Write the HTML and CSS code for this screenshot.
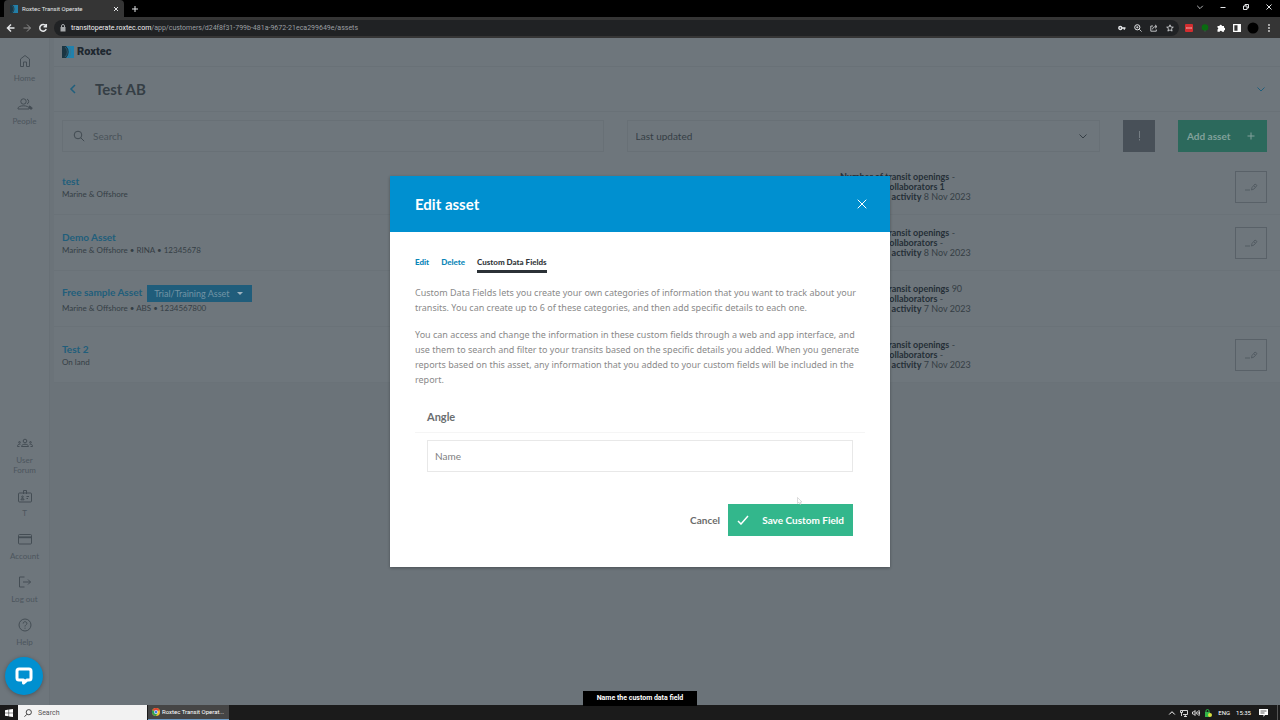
FILE: index.html
```html
<!DOCTYPE html>
<html lang="en">
<head>
<meta charset="UTF-8">
<meta name="viewport" content="width=device-width, initial-scale=1.0">
<title>Roxtec Transit Operate</title>
<link rel="stylesheet" href="styles.css">
</head>
<body>

<svg class="sprite" aria-hidden="true">
    <symbol id="roxtec" viewBox="0 0 12 12">
        <rect width="12" height="12" fill="#2181ac"/>
        <path d="M0 0h4a8 8 0 0 1 0 12H0z" fill="#1b3542"/>
        <path d="M3 1a6.500 6.500 0 0 1 0 10M6 0a8 8 0 0 1 0 12" fill="none" stroke="#3f7087" stroke-width=".6"/>
    </symbol>
    <symbol id="pen" viewBox="0 0 14 10">
        <path d="M1 8h5M7.500 8l.5-2.500 3-3.500 2 1.500-3 3.500zM10 4l1.500 1.200"/>
    </symbol>
    <symbol id="down" viewBox="0 0 10 10">
        <path d="M1.500 3.500 5 7l3.500-3.500"/>
    </symbol>
</svg>

<!-- browser window -->
<header class="browser">
    <div class="tab-strip">
        <div class="tab">
            <svg class="fav"><use href="#roxtec"/></svg>
            <span>Roxtec Transit Operate</span>
            <button class="plain" aria-label="Close tab"><svg class="line" width="6" height="6" viewBox="0 0 6 6"><path d="M1 1l4 4M5 1 1 5"/></svg></button>
        </div>
        <button class="plain new-tab" aria-label="New tab"><svg class="line" width="8" height="8" viewBox="0 0 8 8"><path d="M4 1v6M1 4h6"/></svg></button>
        <div class="window-buttons">
            <button class="plain" aria-label="Search tabs"><svg class="line" width="8" height="8" viewBox="0 0 10 10"><use href="#down"/></svg></button>
            <button class="plain" aria-label="Minimize"><svg class="line" width="8" height="8" viewBox="0 0 8 8"><path d="M1.500 4.500h5"/></svg></button>
            <button class="plain" aria-label="Restore"><svg class="line" width="8" height="8" viewBox="0 0 8 8"><path d="M1.500 3h3.500v3.500H1.500zM3 3V1.500h3.500V5H5"/></svg></button>
            <button class="plain" aria-label="Close"><svg class="line" width="8" height="8" viewBox="0 0 8 8"><path d="M1.500 1.500l5 5M6.500 1.500l-5 5"/></svg></button>
        </div>
    </div>
    <div class="toolbar">
        <button class="plain" aria-label="Back"><svg class="line bold" width="10" height="10" viewBox="0 0 10 10"><path d="M8.500 5h-7M5 1.500 1.500 5 5 8.500"/></svg></button>
        <button class="plain off" aria-label="Forward"><svg class="line" width="10" height="10" viewBox="0 0 10 10"><path d="M1.500 5h7M5 1.500 8.500 5 5 8.500"/></svg></button>
        <button class="plain" aria-label="Reload"><svg class="line bold" width="10" height="10" viewBox="0 0 10 10"><path d="M7.800 3A3.300 3.300 0 1 0 8.200 6M8.300 1v2.700H5.600"/></svg></button>
        <div class="address">
            <svg width="6" height="8" viewBox="0 0 6 8"><rect x=".5" y="3" width="5" height="4.500" fill="#a5a8aa"/><path d="M1.500 3V2a1.500 1.500 0 0 1 3 0v1" fill="none" stroke="#a5a8aa"/></svg>
            <span class="url"><b>transitoperate.roxtec.com</b>/app/customers/d24f8f31-799b-481a-9672-21eca299649e/assets</span>
            <div class="icons">
                <svg class="line" width="8" height="8" viewBox="0 0 8 8"><circle cx="2.300" cy="4" r="1.500" stroke-width="1.400"/><path d="M4 4h3.500M6.300 4v1.800" stroke-width="1.300"/></svg>
                <svg class="line" width="8" height="8" viewBox="0 0 8 8"><circle cx="3.300" cy="3.300" r="2.600"/><path d="M5.300 5.300 7.600 7.600M2.200 3.300h2.200M3.300 2.200v2.200" stroke-width=".8"/></svg>
                <svg class="line" width="8" height="8" viewBox="0 0 8 8"><path d="M3 2H.8v5.200h5.500V5.500M2.500 5.300C2.800 3.500 4 2.600 6 2.600M5 .9l2 1.700-2 1.700" stroke-width=".8"/></svg>
                <svg class="line" width="8" height="8" viewBox="0 0 8 8"><path d="M4 .8l.9 2.200 2.400.2-1.800 1.500.6 2.400L4 5.900 1.900 7.100l.6-2.400L.7 3.200l2.400-.2z" stroke-width=".8"/></svg>
            </div>
        </div>
        <div class="icons">
            <svg width="8" height="8" viewBox="0 0 8 8"><rect width="8" height="8" rx="1" fill="#d32d2f"/><path d="M1.300 4h1.300M3.400 4h1.200M5.400 4h1.300" stroke="#fff" stroke-width="1.200"/></svg>
            <svg width="8" height="8" viewBox="0 0 8 8"><circle cx="4" cy="3.500" r="3.300" fill="#0a6b10"/><path d="M3.500 6h1v2h-1z" fill="#30583a"/></svg>
            <svg width="8" height="8" viewBox="0 0 8 8"><path d="M.5 2h2a1.200 1.200 0 1 1 2.400 0H7v2a1.200 1.200 0 1 1 0 2v1.700H5a1.200 1.200 0 0 0-2.300 0H.5V5.500a1.200 1.200 0 0 0 0-2z" fill="#fff"/></svg>
            <svg width="8" height="8" viewBox="0 0 8 8"><path d="M.7.700h6.600v6.600H.7z" fill="none" stroke="#fff" stroke-width="1.300"/><path d="M4.500 1h3v6h-3z" fill="#fff"/></svg>
            <svg class="avatar" viewBox="0 0 12 12"><circle cx="6" cy="6" r="5.500"/></svg>
            <svg width="8" height="8" viewBox="0 0 8 8" fill="#ddd"><circle cx="4" cy="1" r=".9"/><circle cx="4" cy="4" r=".9"/><circle cx="4" cy="7" r=".9"/></svg>
        </div>
    </div>
</header>

<div class="app">
    <nav class="sidebar">
        <a href="#"><svg viewBox="0 0 18 18"><path d="M4.500 14.500V7L9 3.500 13.500 7v7.500h-3V10h-3v4.500z"/></svg>Home</a>
        <a href="#"><svg viewBox="0 0 18 18"><circle cx="7.500" cy="6.500" r="2.700"/><path d="M2 14v-.7c0-1.500 2.500-2.500 5.500-2.500s5.500 1 5.500 2.500v.7zM11 4a2.700 2.700 0 0 1 0 5"/><path class="solid" d="M13 11c2 .5 3 1.200 3 2.500v.5h-2z"/></svg>People</a>
        <a href="#" class="first-bottom"><svg viewBox="0 0 18 18"><circle cx="9" cy="7" r="1.800"/><path d="M5.500 12.500c0-3 7-3 7 0zM1.500 12.500c0-2 1-2.500 3-2.300M16.500 12.500c0-2-1-2.500-3-2.300M1.500 12.500h2M14.500 12.500h2"/><circle cx="3.500" cy="8.300" r=".8"/><circle cx="14.500" cy="8.300" r=".8"/></svg>User Forum</a>
        <a href="#"><svg viewBox="0 0 18 18"><rect x="2.500" y="6" width="13" height="9" rx="1"/><path d="M7.500 7V3.500h3V7M5 12.800c0-2 3-2 3 0zM10.500 9.500H13M10.500 11.500h1.500"/><circle cx="6.500" cy="9.800" r=".8"/></svg>T</a>
        <a href="#"><svg viewBox="0 0 18 18"><rect x="2.500" y="4.500" width="13" height="9.500" rx="1"/><path d="M2.500 7.300h13" stroke-width="1.800"/></svg>Account</a>
        <a href="#"><svg viewBox="0 0 18 18"><path d="M8.500 4H3.500v10h5M7 9h7.500M12 6.500 14.500 9 12 11.500"/></svg>Log out</a>
        <a href="#"><svg viewBox="0 0 18 18"><circle cx="9" cy="9" r="6"/><path d="M7.200 7.500c0-2.500 3.700-2.300 3.700 0 0 1.300-1.900 1.400-1.900 3M9 11.700v1"/></svg>Help</a>
    </nav>

    <main class="main">
        <div class="logo"><svg><use href="#roxtec"/></svg><strong>Roxtec</strong></div>
        <div class="customer">
            <a href="#" aria-label="Back to customers"><svg class="line bold" width="10" height="10" viewBox="0 0 10 10"><path d="M7 1 3 5l4 4"/></svg></a>
            <h1>Test AB</h1>
            <button class="plain" aria-label="Show details"><svg class="line" width="10" height="10"><use href="#down"/></svg></button>
        </div>
        <div class="filters">
            <div class="search">
                <svg class="line" width="12" height="12" viewBox="0 0 12 12"><circle cx="5" cy="5" r="3.800"/><path d="M7.800 7.800 11.200 11.200"/></svg>
                <input type="text" placeholder="Search" aria-label="Search">
            </div>
            <div class="sort">
                <select aria-label="Sort by"><option>Last updated</option></select>
                <svg class="line" width="10" height="10"><use href="#down"/></svg>
            </div>
            <button class="direction" aria-label="Sort direction"><svg class="line" width="10" height="12" viewBox="0 0 10 12"><path d="M5.500 1v7M5.500 9v1.500"/></svg></button>
            <button class="add">Add asset <svg class="line" width="10" height="10" viewBox="0 0 10 10"><path d="M5 1.500v7M1.500 5h7"/></svg></button>
        </div>
        <ul class="assets">
            <li>
                <div class="asset"><a href="#">test</a><p>Marine &amp; Offshore</p></div>
                <div class="meta"><b>Number of transit openings</b> -<br><b>Number of collaborators 1</b><br><b>Last training activity</b> 8 Nov 2023</div>
                <button class="edit" aria-label="Edit test"><svg class="line" width="14" height="10"><use href="#pen"/></svg></button>
            </li>
            <li>
                <div class="asset"><a href="#">Demo Asset</a><p>Marine &amp; Offshore • RINA • 12345678</p></div>
                <div class="meta"><b>Number of transit openings</b> -<br><b>Number of collaborators</b> -<br><b>Last training activity</b> 8 Nov 2023</div>
                <button class="edit" aria-label="Edit Demo Asset"><svg class="line" width="14" height="10"><use href="#pen"/></svg></button>
            </li>
            <li>
                <div class="asset"><a href="#">Free sample Asset</a> <button class="badge">Trial/Training Asset <svg width="6" height="4" viewBox="0 0 6 4"><path d="M0 0h6L3 3z"/></svg></button><p>Marine &amp; Offshore • ABS • 1234567800</p></div>
                <div class="meta"><b>Number of transit openings</b> 90<br><b>Number of collaborators</b> -<br><b>Last training activity</b> 7 Nov 2023</div>
            </li>
            <li>
                <div class="asset"><a href="#">Test 2</a><p>On land</p></div>
                <div class="meta"><b>Number of transit openings</b> -<br><b>Number of collaborators</b> -<br><b>Last training activity</b> 7 Nov 2023</div>
                <button class="edit" aria-label="Edit Test 2"><svg class="line" width="14" height="10"><use href="#pen"/></svg></button>
            </li>
        </ul>
    </main>

    <div class="overlay">
        <div class="modal" role="dialog" aria-labelledby="modalTitle">
            <div class="modal-head">
                <h2 id="modalTitle">Edit asset</h2>
                <button class="plain" aria-label="Close dialog"><svg class="line" width="10" height="10" viewBox="0 0 10 10"><path d="M.7.700l8.600 8.600M9.300.7.700 9.300"/></svg></button>
            </div>
            <div class="modal-body">
                <div class="tabs">
                    <a href="#">Edit</a>
                    <a href="#">Delete</a>
                    <a href="#" class="active">Custom Data Fields</a>
                </div>
                <p>Custom Data Fields lets you create your own categories of information that you want to track about your transits. You can create up to 6 of these categories, and then add specific details to each one.</p>
                <p>You can access and change the information in these custom fields through a web and app interface, and use them to search and filter to your transits based on the specific details you added. When you generate reports based on this asset, any information that you added to your custom fields will be included in the report.</p>
                <form>
                    <label for="fieldName">Angle</label>
                    <input type="text" id="fieldName" placeholder="Name">
                    <div class="actions">
                        <button type="button" class="cancel">Cancel</button>
                        <button type="button" class="save"><svg class="line bold" width="12" height="10" viewBox="0 0 12 10"><path d="M1 6l3 3 7-8"/></svg>Save Custom Field</button>
                    </div>
                </form>
            </div>
        </div>
    </div>

    <button class="chat" aria-label="Chat"><svg width="20" height="20" viewBox="0 0 20 20"><path d="M5 3h10a2 2 0 0 1 2 2v7a2 2 0 0 1-2 2h-2l-3.500 3v-3H5a2 2 0 0 1-2-2V5a2 2 0 0 1 2-2z"/></svg></button>
    <svg class="cursor" width="6" height="8" viewBox="0 0 6 8"><path d="M.5.500v6l1.500-1.300L3 7.300l1-.4L3.300 5H5z"/></svg>
</div>

<footer class="taskbar">
    <button class="plain start" aria-label="Start"><svg width="8" height="8" viewBox="0 0 8 8" fill="#fff"><path d="M0 1.200 3.600.6v3.100H0zM4.100.5 8 0v3.700H4.100zM0 4.200h3.600v3.100L0 6.800zM4.100 4.200H8V8l-3.900-.6z"/></svg></button>
    <div class="win-search">
        <svg class="line" width="8" height="8" viewBox="0 0 8 8"><circle cx="4.800" cy="3.200" r="2.600"/><path d="M3 5.200.5 7.700"/></svg>
        <input type="text" placeholder="Search" aria-label="Search Windows">
    </div>
    <button class="task"><svg width="8" height="8" viewBox="0 0 8 8"><circle cx="4" cy="4" r="4" fill="#f2c230"/><path d="M.5 2A4 4 0 0 1 7.500 2L4 4z" fill="#de4334"/><path d="M.5 2A4 4 0 0 0 4 8l1.500-3z" fill="#2fa04f"/><circle cx="4" cy="4" r="1.900" fill="#fff"/><circle cx="4" cy="4" r="1.400" fill="#3f7de8"/></svg>Roxtec Transit Operat...</button>
    <div class="tray">
        <svg class="line" width="8" height="8" viewBox="0 0 8 8"><path d="M1.200 5.500 4 2.700l2.800 2.800"/></svg>
        <svg class="line" width="8" height="8" viewBox="0 0 8 8"><path d="M2.500 1.500h5v4H3M4 7.500h3M5.300 5.500v2M.5 1.500h2v2h-2zM1.500 3.500v3.500" stroke-width=".8"/></svg>
        <svg class="line" width="8" height="8" viewBox="0 0 8 8"><path d="M.5 3h1L3 1.500v5L1.500 5h-1zM4.300 2.800v2.400M5.600 2c.7 1 .7 3 0 4M6.800 1c1 2 1 4 0 6" stroke-width=".8"/></svg>
        <svg width="8" height="8" viewBox="0 0 8 8"><rect x="1" y="3" width="5" height="5" fill="#31b44a"/><path d="M2 3V2a1.500 1.500 0 0 1 3 0v1" fill="none" stroke="#31b44a"/><circle cx="6" cy="6" r="2" fill="#d6dd3f"/></svg>
        <span>ENG</span>
        <span>15:35</span>
        <svg class="notes" width="9" height="8" viewBox="0 0 9 8"><path d="M0 0h9v6H6L4.500 8V6H0z" fill="#fff"/><path d="M1.500 2h6M1.500 4h4" stroke="#222" stroke-width=".7"/></svg>
    </div>
</footer>
<div class="caption">Name the custom data field</div>

</body>
</html>
```

FILE: styles.css
```css
* {
    box-sizing: border-box;
}
body {
    margin: 0;
    height: 100vh;
    display: flex;
    flex-direction: column;
    overflow: hidden;
    font-family: Lato, "Liberation Sans", sans-serif;
    font-size: 10px;
    line-height: 10px;
    color: #353e45;
    background: #6b7379;
}
h1, h2, p, ul {
    margin: 0;
    padding: 0;
}
a {
    color: inherit;
    text-decoration: none;
}
button, input, select {
    font: inherit;
    color: inherit;
    border: 0;
    padding: 0;
    background: none;
    border-radius: 0;
}
button {
    cursor: pointer;
}
svg {
    display: block;
    flex: none;
}
.sprite {
    position: absolute;
    width: 0;
    height: 0;
}
.line, #pen, #down {
    fill: none;
    stroke: currentColor;
}
.bold {
    stroke-width: 1.5;
}
.plain {
    display: flex;
    align-items: center;
    justify-content: center;
}

/* browser */
.browser {
    flex: none;
    font-family: Roboto, sans-serif;
    font-size: 7px;
    color: #e4e6e8;
    background: #000;
}
.tab-strip {
    display: flex;
    height: 17px;
    padding-left: 4px;
}
.tab {
    display: flex;
    align-items: center;
    gap: 4px;
    width: 120px;
    padding: 0 5px 0 6px;
    font-size: 6px;
    background: #353535;
    border-radius: 4px 4px 0 0;
}
.tab span {
    flex: 1;
}
.fav {
    width: 8px;
    height: 8px;
}
.new-tab {
    width: 22px;
}
.window-buttons {
    display: flex;
    margin-left: auto;
}
.window-buttons button {
    width: 23px;
    height: 14px;
}
.toolbar {
    display: flex;
    align-items: center;
    height: 21px;
    padding: 0 7px 0 6px;
    gap: 6px;
    background: #353535;
}
.off {
    color: #929292;
}
.address {
    flex: 1;
    display: flex;
    align-items: center;
    gap: 5px;
    height: 16px;
    padding: 0 5px 0 6px;
    border-radius: 8px;
    background: #202224;
}
.url {
    flex: 1;
    color: #9b9fa2;
}
.url b {
    font-weight: normal;
    color: #f1f1f1;
}
.icons {
    display: flex;
    align-items: center;
    gap: 8px;
}
.avatar {
    width: 12px;
    height: 12px;
    margin: 0 -2px;
}

/* app */
.app {
    position: relative;
    flex: 1;
    min-height: 0;
    display: flex;
}
.sidebar {
    display: flex;
    flex-direction: column;
    gap: 12px;
    width: 50px;
    padding: 14px 8px 58px;
    font-size: 8px;
    text-align: center;
    color: #4c555c;
    background: #6e767c;
    border-right: 1px solid #687076;
}
.sidebar svg {
    width: 18px;
    height: 18px;
    margin: 0 auto 3px;
    fill: none;
    stroke: #444d54;
}
.sidebar .solid {
    fill: #444d54;
}
.first-bottom {
    margin-top: auto;
}
.main {
    flex: 1;
    margin-left: 4px;
}
.logo {
    display: flex;
    align-items: center;
    gap: 3px;
    height: 29px;
    padding-left: 8px;
    font-size: 11px;
    color: #1e2830;
    background: #6e767c;
    border-bottom: 1px solid #697177;
}
.logo svg {
    width: 12px;
    height: 12px;
}
.logo strong {
    font-family: Roboto, sans-serif;
    font-weight: 900;
}
.customer {
    display: flex;
    align-items: center;
    gap: 17px;
    height: 45px;
    padding: 0 14px;
    background: #6e767c;
    border-bottom: 1px solid #697177;
    color: #205f7d;
}
.customer h1 {
    flex: 1;
    font-size: 15px;
    line-height: 20px;
    color: #353e45;
}
.filters {
    display: flex;
    gap: 23px;
    padding: 8px 13px 7px 8px;
    background: #6e767c;
}
.search, .sort {
    display: flex;
    align-items: center;
    height: 32px;
    border: 1px solid #687076;
}
.search {
    flex: 518;
    gap: 8px;
    padding: 0 10px;
    color: #414a51;
}
.search input {
    flex: 1;
}
.search input::placeholder {
    color: #4a535a;
}
.sort {
    flex: 470;
    position: relative;
}
.sort select {
    flex: 1;
    height: 30px;
    padding: 0 8px;
    appearance: none;
}
.sort svg {
    position: absolute;
    right: 11px;
    pointer-events: none;
}
.direction {
    display: flex;
    align-items: center;
    justify-content: center;
    width: 32px;
    color: #757d83;
    background: #485058;
}
.add {
    display: flex;
    align-items: center;
    justify-content: space-between;
    width: 89px;
    padding: 0 11px 0 9px;
    font-weight: bold;
    color: #82a19b;
    background: #2c695c;
}
.assets {
    list-style: none;
    background: #6e767c;
}
.assets li {
    display: flex;
    align-items: center;
    height: 56px;
    padding: 0 13px 0 8px;
    border-bottom: 1px solid #6a7278;
}
.asset {
    width: 778px;
    padding-top: 2px;
    font-size: 8px;
    line-height: 12px;
}
.asset a {
    font-size: 10px;
    font-weight: bold;
    color: #215e7b;
}
.badge {
    display: inline-flex;
    align-items: center;
    justify-content: space-between;
    width: 105px;
    height: 17px;
    margin-left: 3px;
    padding: 0 9px 0 7px;
    font-size: 9px;
    vertical-align: middle;
    color: #7294a5;
    background: #205d7b;
}
.badge svg {
    fill: #9fb4bf;
}
.meta {
    font-size: 9px;
}
.meta b {
    color: #252f37;
}
.edit {
    display: flex;
    align-items: center;
    justify-content: center;
    width: 32px;
    height: 32px;
    margin-left: auto;
    color: #535c63;
    border: 1px solid #596168;
}

/* edit asset dialog */
.overlay {
    position: absolute;
    inset: 0;
    display: flex;
    align-items: center;
    justify-content: center;
}
.modal {
    width: 500px;
    color: #8a8a8a;
    background: #fff;
    box-shadow: 0 1px 3px rgba(0, 0, 0, 0.3);
}
.modal-head {
    display: flex;
    align-items: center;
    justify-content: space-between;
    height: 56px;
    padding: 0 23px 0 25px;
    color: #fff;
    background: #0090d0;
}
.modal-head h2 {
    font-size: 15px;
    line-height: 20px;
}
.modal-body {
    padding: 25px 25px 31px;
}
.modal-body p {
    margin-bottom: 12px;
    font-family: "Noto Sans", sans-serif;
    font-size: 9px;
    line-height: 15px;
}
.tabs {
    display: flex;
    gap: 12px;
    margin-bottom: 12px;
    font-size: 8px;
    font-weight: 900;
    color: #0a86b8;
}
.tabs a {
    padding-bottom: 3px;
    border-bottom: 3px solid transparent;
}
.tabs .active {
    color: #33383c;
    border-color: #2b3136;
}
.modal label {
    display: block;
    margin: 25px 0 7px;
    padding: 0 12px 10px;
    font-size: 11px;
    font-weight: bold;
    color: #6b6e70;
    border-bottom: 1px solid #f5f5f5;
}
.modal input {
    display: block;
    width: calc(100% - 24px);
    height: 32px;
    margin: 0 12px 32px;
    padding: 0 7px;
    border: 1px solid #e8e8e8;
}
.modal input::placeholder {
    color: #808080;
}
.actions {
    display: flex;
    justify-content: flex-end;
    gap: 8px;
    padding-right: 12px;
    font-weight: bold;
}
.cancel {
    color: #6b6b6b;
}
.save {
    display: flex;
    align-items: center;
    justify-content: space-between;
    width: 125px;
    height: 32px;
    padding: 0 9px;
    color: #fff;
    background: #33b78c;
}
.chat {
    position: absolute;
    left: 5px;
    bottom: 10px;
    display: flex;
    align-items: center;
    justify-content: center;
    width: 38px;
    height: 38px;
    border-radius: 50%;
    background: #0090d0;
    box-shadow: 0 1px 4px rgba(0, 0, 0, 0.3);
}
.chat path {
    fill: none;
    stroke: #fff;
    stroke-width: 3;
    stroke-linejoin: round;
}
.cursor {
    position: absolute;
    left: 797px;
    top: 459px;
    fill: #fff;
    stroke: #c4c4c4;
    stroke-width: 0.6;
}

/* taskbar */
.taskbar {
    display: flex;
    flex: none;
    height: 15px;
    font-family: Roboto, sans-serif;
    font-size: 7px;
    color: #fff;
    background: #1b1b1b;
}
.start {
    width: 18px;
}
.win-search {
    display: flex;
    align-items: center;
    gap: 6px;
    width: 129px;
    padding: 0 6px;
    color: #444;
    background: #f2f2f2;
}
.win-search input {
    flex: 1;
    min-width: 0;
}
.win-search input::placeholder {
    color: #555;
}
.task {
    display: flex;
    align-items: center;
    gap: 2px;
    width: 81px;
    margin-left: 1px;
    padding: 0 4px;
    font-size: 6px;
    white-space: nowrap;
    background: #454545;
    border-bottom: 1px solid #6c9cc8;
}
.tray {
    display: flex;
    align-items: center;
    gap: 4px;
    margin-left: auto;
    margin-right: 2px;
    padding-right: 9px;
    font-size: 6px;
    border-right: 1px solid #555;
}
.tray span {
    margin-left: 2px;
}
.notes {
    margin-left: 4px;
}
.caption {
    position: absolute;
    left: 50%;
    bottom: 14px;
    transform: translateX(-50%);
    width: 114px;
    font: bold 7px/15px Roboto, sans-serif;
    text-align: center;
    white-space: nowrap;
    color: #fff;
    background: #000;
}
```
